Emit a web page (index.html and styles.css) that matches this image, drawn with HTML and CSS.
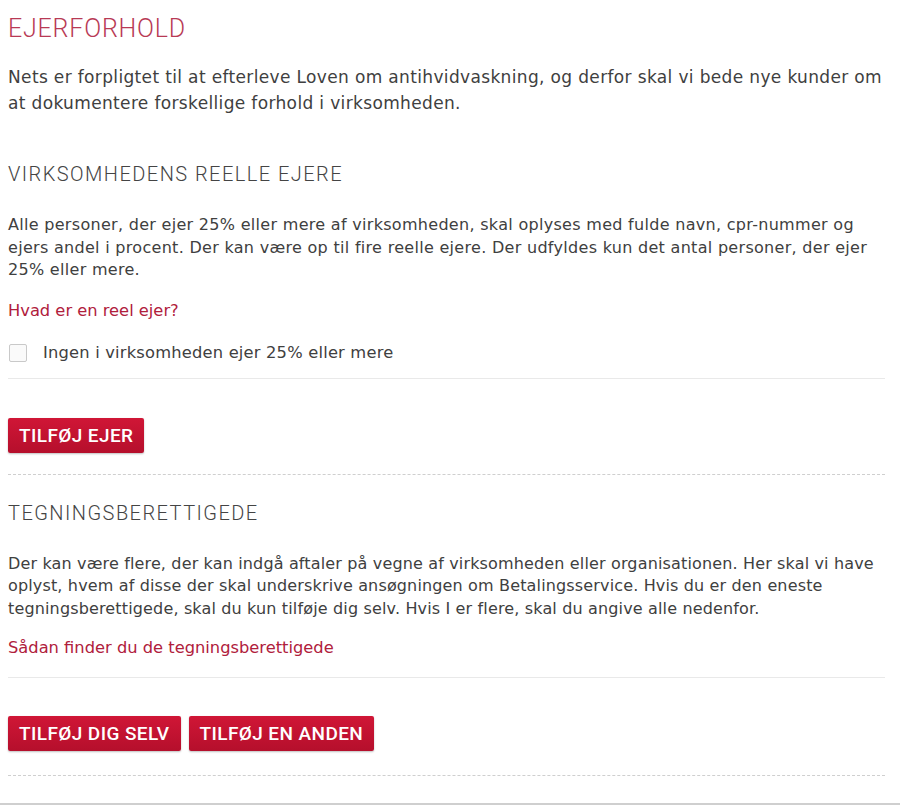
FILE: index.html
```html
<!DOCTYPE html>
<html lang="da">
<head>
<meta charset="utf-8">
<title>Ejerforhold</title>
<link rel="stylesheet" href="styles.css">
</head>
<body>
<main class="page">
  <h1 class="title">EJERFORHOLD</h1>
  <p class="intro">Nets er forpligtet til at efterleve Loven om antihvidvaskning, og derfor skal vi bede nye kunder om at dokumentere forskellige forhold i virksomheden.</p>

  <section class="block">
    <h2 class="subtitle">VIRKSOMHEDENS REELLE EJERE</h2>
    <p class="text">Alle personer, der ejer 25% eller mere af virksomheden, skal oplyses med fulde navn, cpr-nummer og ejers andel i procent. Der kan være op til fire reelle ejere. Der udfyldes kun det antal personer, der ejer 25% eller mere.</p>
    <a class="link" href="#">Hvad er en reel ejer?</a>
    <label class="check">
      <input type="checkbox" class="check-box">
      <span class="check-label">Ingen i virksomheden ejer 25% eller mere</span>
    </label>
    <div class="actions">
      <button class="btn" type="button">TILFØJ EJER</button>
    </div>
  </section>

  <section class="block">
    <h2 class="subtitle">TEGNINGSBERETTIGEDE</h2>
    <p class="text">Der kan være flere, der kan indgå aftaler på vegne af virksomheden eller organisationen. Her skal vi have oplyst, hvem af disse der skal underskrive ansøgningen om Betalingsservice. Hvis du er den eneste tegningsberettigede, skal du kun tilføje dig selv. Hvis I er flere, skal du angive alle nedenfor.</p>
    <a class="link link-last" href="#">Sådan finder du de tegningsberettigede</a>
    <div class="actions actions-solid">
      <button class="btn" type="button">TILFØJ DIG SELV</button>
      <button class="btn" type="button">TILFØJ EN ANDEN</button>
    </div>
  </section>
</main>
<div class="footer-rule"></div>
</body>
</html>
```

FILE: styles.css
```css
html, body {
  margin: 0;
  padding: 0;
  background: #ffffff;
}

body {
  font-family: "DejaVu Sans", Verdana, sans-serif;
  color: #404040;
  height: 805px;
  position: relative;
  overflow: hidden;
}

.page {
  width: 877px;
  padding: 14px 0 0 8px;
}

.title {
  margin: 0;
  font-family: Roboto, "Liberation Sans", sans-serif;
  font-weight: 300;
  font-size: 25px;
  line-height: 30px;
  letter-spacing: 0.8px;
  color: #b83a55;
}

.intro {
  margin: 20px 0 0;
  font-size: 17px;
  line-height: 26px;
  letter-spacing: 0.35px;
}

.subtitle {
  margin: 46px 0 0;
  font-family: Roboto, "Liberation Sans", sans-serif;
  font-weight: 300;
  font-size: 20px;
  line-height: 24px;
  letter-spacing: 1.45px;
  color: #444444;
}

.block + .block .subtitle {
  margin-top: 26px;
}

.text {
  margin: 28px 0 0;
  font-size: 16px;
  line-height: 22.5px;
  letter-spacing: 0.3px;
}

.block + .block .text {
  margin-top: 28px;
  letter-spacing: 0.15px;
}

.link {
  display: block;
  margin-top: 19px;
  font-size: 16.3px;
  line-height: 20px;
  color: #b0203c;
  text-decoration: none;
}

.check {
  display: flex;
  align-items: center;
  gap: 16px;
  margin-top: 22px;
  padding-bottom: 15px;
  border-bottom: 1px solid #e9e9e9;
}

.check-box {
  appearance: none;
  margin: 0 0 0 1px;
  width: 18px;
  height: 18px;
  border: 1px solid #c9c9c9;
  border-radius: 2px;
  background: #fafafa;
}

.check-label {
  font-size: 16.3px;
  line-height: 20px;
  letter-spacing: 0.2px;
}

.actions {
  display: flex;
  gap: 8px;
  padding: 39px 0 21px;
  border-bottom: 1px dashed #cfcfcf;
}

.block + .block .link {
  margin-top: 18px;
}

.link-last {
  padding-bottom: 19px;
  border-bottom: 1px solid #e9e9e9;
}

.actions-solid {
  padding-top: 38px;
  padding-bottom: 24px;
}

.btn {
  height: 35px;
  padding: 0 11px;
  border: 0;
  border-radius: 2px;
  background: linear-gradient(#d01636, #b50f2c);
  box-shadow: 0 1px 2px rgba(0, 0, 0, 0.25);
  color: #ffffff;
  font-family: Roboto, "Liberation Sans", sans-serif;
  font-weight: 500;
  font-size: 19px;
  letter-spacing: 0.4px;
  cursor: pointer;
}

.footer-rule {
  position: absolute;
  left: 0;
  right: 0;
  bottom: 0;
  height: 2px;
  background: #cfcfcf;
}
```
